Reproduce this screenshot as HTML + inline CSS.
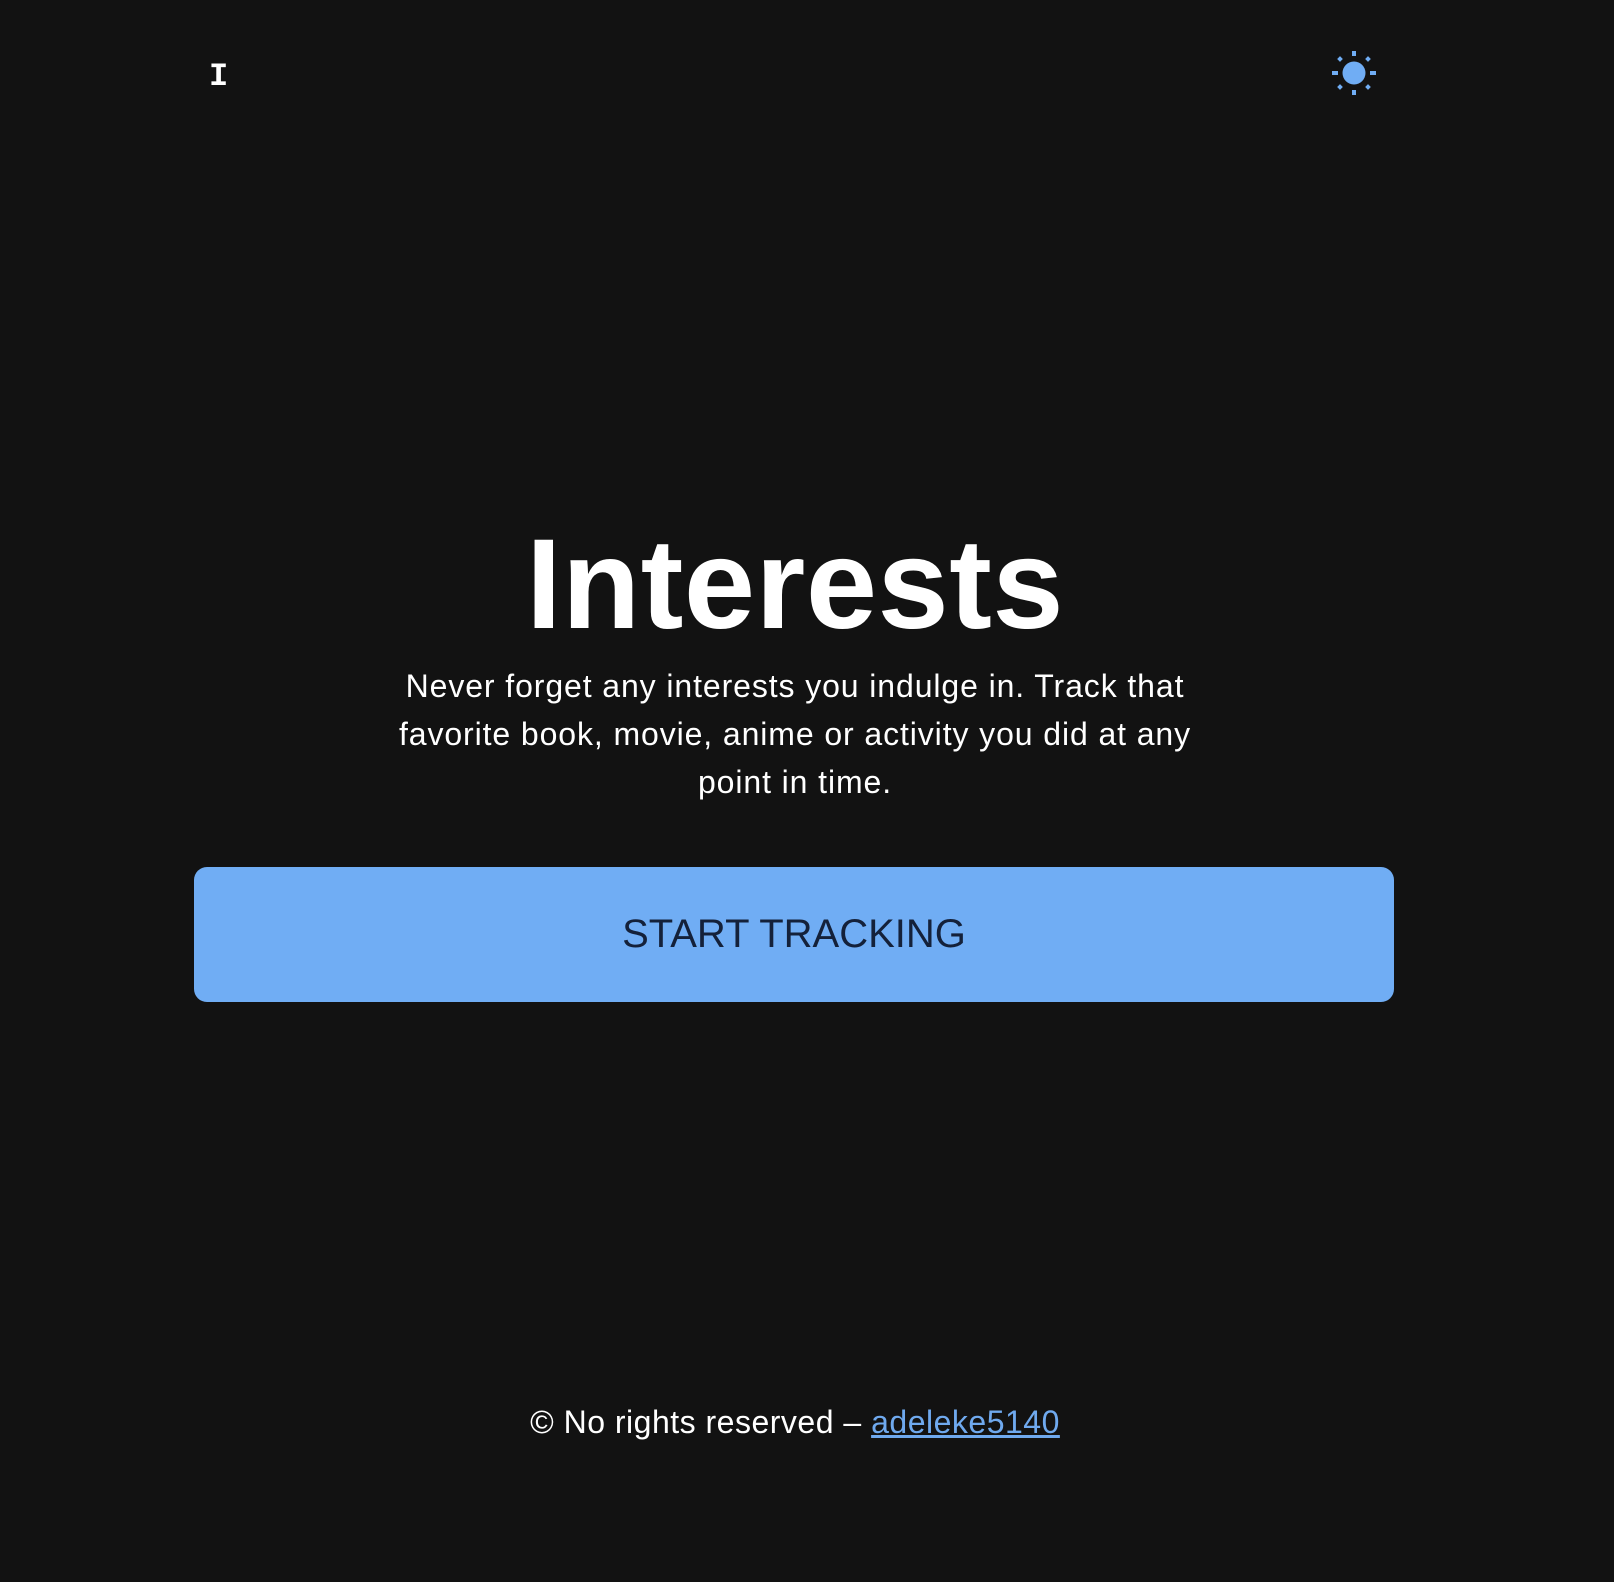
<!DOCTYPE html>
<html><head><meta charset="utf-8"><style>
html,body{margin:0;padding:0;background:#121212;width:1614px;height:1582px;overflow:hidden;font-family:"Liberation Sans",sans-serif;color:#fff}
.logo{position:absolute;left:209px;top:61px;font-family:"Liberation Mono",monospace;font-weight:bold;font-size:32px;line-height:32px}
.sun{position:absolute;left:1330px;top:50px}
h1{position:absolute;left:0;width:1590px;top:515px;margin:0;text-align:center;font-size:128px;font-weight:bold;letter-spacing:0.5px;line-height:140px}
p{position:absolute;left:345px;width:900px;top:662px;margin:0;text-align:center;font-size:32px;letter-spacing:0.9px;line-height:48px}
.btn{position:absolute;left:194px;top:867px;width:1200px;height:135px;background:#70adf4;border-radius:13px;color:#14213a;font-size:40px;text-align:center;line-height:135px}
.foot{position:absolute;left:0;width:1590px;top:1402px;text-align:center;font-size:32px;letter-spacing:0.5px;line-height:40px}
.foot a{color:#6fa9ee;text-decoration:underline}
</style></head><body>
<div class="logo">I</div>
<svg class="sun" width="48" height="48" viewBox="0 0 48 48" fill="#70adf4">
<circle cx="24" cy="23" r="11.5"/>
<rect x="22" y="1" width="4" height="5"/><rect x="22" y="40" width="4" height="5"/>
<rect x="2" y="21" width="6" height="4"/><rect x="40" y="21" width="6" height="4"/>
<rect x="8" y="7" width="4" height="4" transform="rotate(45 10 9)"/><rect x="36" y="7" width="4" height="4" transform="rotate(45 38 9)"/>
<rect x="8" y="35" width="4" height="4" transform="rotate(45 10 37)"/><rect x="36" y="35" width="4" height="4" transform="rotate(45 38 37)"/>
</svg>
<h1>Interests</h1>
<p>Never forget any interests you indulge in. Track that<br>favorite book, movie, anime or activity you did at any<br>point in time.</p>
<div class="btn">START TRACKING</div>
<div class="foot">© No rights reserved – <a>adeleke5140</a></div>
</body></html>
